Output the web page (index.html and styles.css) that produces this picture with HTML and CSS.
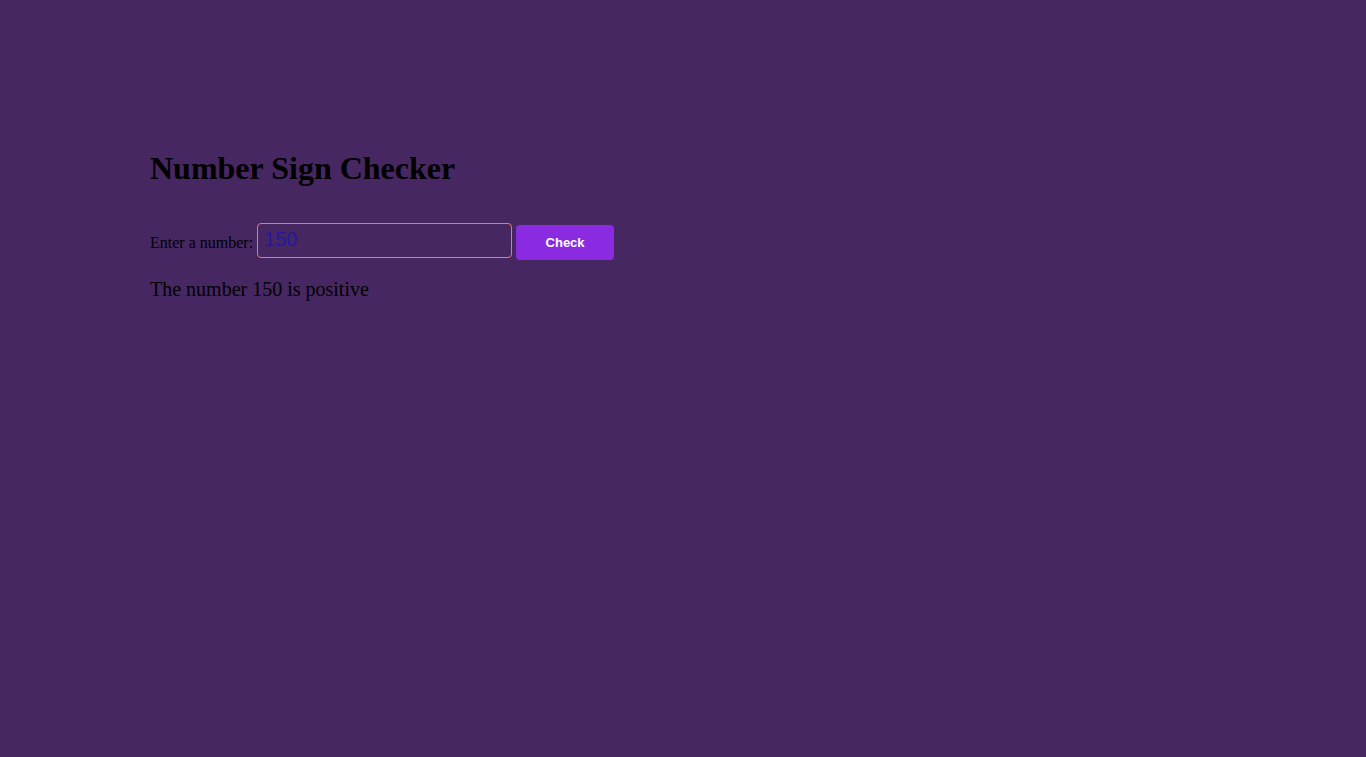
FILE: index.html
```html
<!DOCTYPE html>
<html>
<head>
<meta charset="utf-8">
<title>Number Sign Checker</title>
<link rel="stylesheet" href="styles.css">
</head>
<body>
<main class="app">
  <h1 class="title">Number Sign Checker</h1>
  <div class="form-row">
    <label class="label" for="num">Enter a number:</label>
    <input class="num-input" id="num" type="text" value="150">
    <button class="check-btn" type="button">Check</button>
  </div>
  <p class="result">The number 150 is positive</p>
</main>
</body>
</html>
```

FILE: styles.css
```css
html, body {
  margin: 0;
  padding: 0;
  background: #472762;
  min-height: 100%;
}
body {
  font-family: "Liberation Serif", "Times New Roman", serif;
  color: #000;
  height: 757px;
}
.app {
  padding: 150px 150px 0 150px;
}
.title {
  margin: 0;
  font-size: 32px;
  font-weight: bold;
  line-height: 37px;
}
.form-row {
  display: flex;
  align-items: center;
  margin-top: 36px;
  gap: 4px;
}
.label {
  font-size: 16px;
  margin-top: 2px;
}
.num-input {
  box-sizing: border-box;
  width: 255px;
  height: 35px;
  border: 1px solid #e8787c;
  border-radius: 4px;
  background: transparent;
  padding: 0 6px 2px 6px;
  font-family: "Liberation Sans", Arial, sans-serif;
  font-size: 20px;
  color: #2418a0;
  outline: none;
  margin-top: -2px;
}
.check-btn {
  box-sizing: border-box;
  width: 98px;
  height: 35px;
  border: none;
  border-radius: 4px;
  background: #8a2be2;
  color: #fff;
  font-family: "Liberation Sans", Arial, sans-serif;
  font-size: 13px;
  font-weight: bold;
  margin-top: 2px;
}
.result {
  margin: 18px 0 0 0;
  font-size: 20px;
  line-height: 23px;
}
```
